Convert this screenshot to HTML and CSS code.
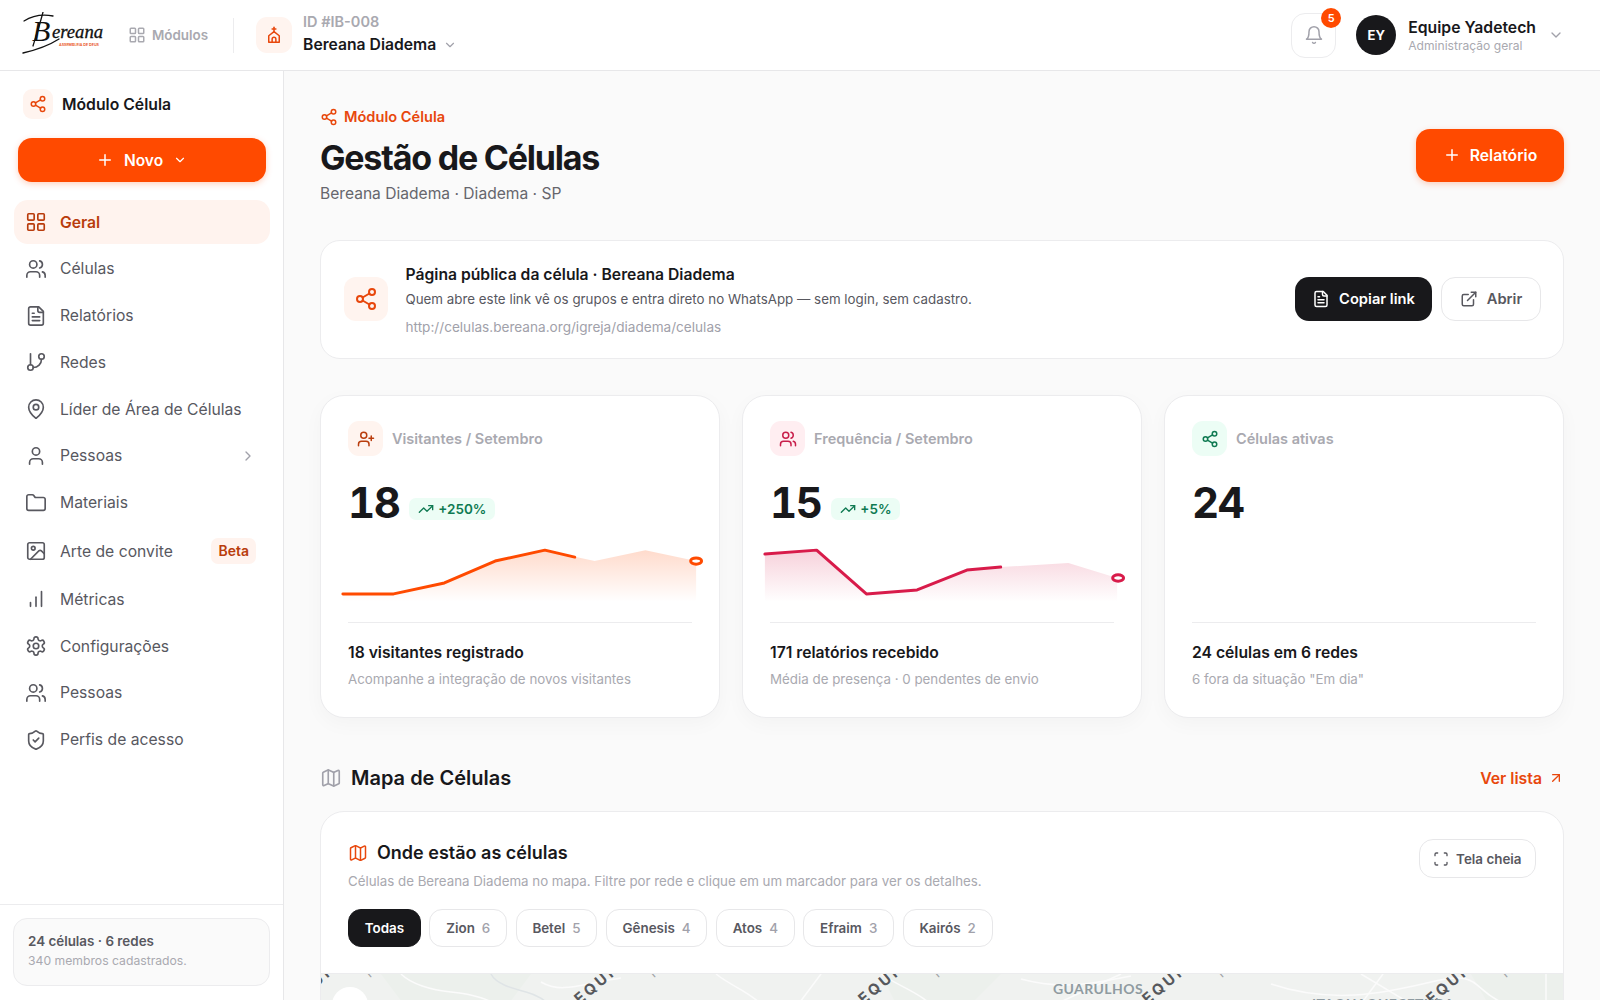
FILE: index.html
```html
<!DOCTYPE html>
<html lang="pt-BR">
<head>
    <meta charset="UTF-8">
    <title>Gestão de Células</title>
    <link rel="stylesheet" href="styles.css">
</head>
<body>

<!-- Icon sprite -->
<svg class="sprite" xmlns="http://www.w3.org/2000/svg">
    <symbol id="i-grid" viewBox="0 0 24 24"><rect x="3" y="3" width="7" height="7" rx="1"/><rect x="14" y="3" width="7" height="7" rx="1"/><rect x="14" y="14" width="7" height="7" rx="1"/><rect x="3" y="14" width="7" height="7" rx="1"/></symbol>
    <symbol id="i-share" viewBox="0 0 24 24"><circle cx="18" cy="5" r="3"/><circle cx="6" cy="12" r="3"/><circle cx="18" cy="19" r="3"/><path d="M8.59 13.51 15.42 17.49"/><path d="M15.41 6.51 8.59 10.49"/></symbol>
    <symbol id="i-users" viewBox="0 0 24 24"><path d="M16 21v-2a4 4 0 0 0-4-4H6a4 4 0 0 0-4 4v2"/><circle cx="9" cy="7" r="4"/><path d="M22 21v-2a4 4 0 0 0-3-3.87"/><path d="M16 3.13a4 4 0 0 1 0 7.75"/></symbol>
    <symbol id="i-file" viewBox="0 0 24 24"><path d="M15 2H6a2 2 0 0 0-2 2v16a2 2 0 0 0 2 2h12a2 2 0 0 0 2-2V7Z"/><path d="M14 2v4a2 2 0 0 0 2 2h4"/><path d="M10 9H8"/><path d="M16 13H8"/><path d="M16 17H8"/></symbol>
    <symbol id="i-branch" viewBox="0 0 24 24"><path d="M6 3v12"/><circle cx="18" cy="6" r="3"/><circle cx="6" cy="18" r="3"/><path d="M18 9a9 9 0 0 1-9 9"/></symbol>
    <symbol id="i-pin" viewBox="0 0 24 24"><path d="M20 10c0 4.993-5.539 10.193-7.399 11.799a1 1 0 0 1-1.202 0C9.539 20.193 4 14.993 4 10a8 8 0 0 1 16 0"/><circle cx="12" cy="10" r="3"/></symbol>
    <symbol id="i-user" viewBox="0 0 24 24"><path d="M19 21v-2a4 4 0 0 0-4-4H9a4 4 0 0 0-4 4v2"/><circle cx="12" cy="7" r="4"/></symbol>
    <symbol id="i-folder" viewBox="0 0 24 24"><path d="M20 20a2 2 0 0 0 2-2V8a2 2 0 0 0-2-2h-7.9a2 2 0 0 1-1.69-.9L9.6 3.9A2 2 0 0 0 7.93 3H4a2 2 0 0 0-2 2v13a2 2 0 0 0 2 2Z"/></symbol>
    <symbol id="i-image" viewBox="0 0 24 24"><rect x="3" y="3" width="18" height="18" rx="2"/><circle cx="9" cy="9" r="2"/><path d="m21 15-3.086-3.086a2 2 0 0 0-2.828 0L6 21"/></symbol>
    <symbol id="i-bars" viewBox="0 0 24 24"><path d="M12 20V10"/><path d="M18 20V4"/><path d="M6 20v-4"/></symbol>
    <symbol id="i-gear" viewBox="0 0 24 24"><path d="M12.22 2h-.44a2 2 0 0 0-2 2v.18a2 2 0 0 1-1 1.73l-.43.25a2 2 0 0 1-2 0l-.15-.08a2 2 0 0 0-2.73.73l-.22.38a2 2 0 0 0 .73 2.73l.15.1a2 2 0 0 1 1 1.72v.51a2 2 0 0 1-1 1.74l-.15.09a2 2 0 0 0-.73 2.73l.22.38a2 2 0 0 0 2.73.73l.15-.08a2 2 0 0 1 2 0l.43.25a2 2 0 0 1 1 1.73V20a2 2 0 0 0 2 2h.44a2 2 0 0 0 2-2v-.18a2 2 0 0 1 1-1.73l.43-.25a2 2 0 0 1 2 0l.15.08a2 2 0 0 0 2.73-.73l.22-.39a2 2 0 0 0-.73-2.73l-.15-.08a2 2 0 0 1-1-1.74v-.5a2 2 0 0 1 1-1.74l.15-.09a2 2 0 0 0 .73-2.73l-.22-.38a2 2 0 0 0-2.73-.73l-.15.08a2 2 0 0 1-2 0l-.43-.25a2 2 0 0 1-1-1.73V4a2 2 0 0 0-2-2z"/><circle cx="12" cy="12" r="3"/></symbol>
    <symbol id="i-shield" viewBox="0 0 24 24"><path d="M20 13c0 5-3.5 7.5-7.66 8.95a1 1 0 0 1-.67-.01C7.5 20.5 4 18 4 13V6a1 1 0 0 1 1-1c2 0 4.5-1.2 6.24-2.72a1.17 1.17 0 0 1 1.52 0C14.51 3.81 17 5 19 5a1 1 0 0 1 1 1z"/><path d="m9 12 2 2 4-4"/></symbol>
    <symbol id="i-bell" viewBox="0 0 24 24"><path d="M6 8a6 6 0 0 1 12 0c0 7 3 9 3 9H3s3-2 3-9"/><path d="M10.3 21a1.94 1.94 0 0 0 3.4 0"/></symbol>
    <symbol id="i-down" viewBox="0 0 24 24"><path d="m6 9 6 6 6-6"/></symbol>
    <symbol id="i-right" viewBox="0 0 24 24"><path d="m9 18 6-6-6-6"/></symbol>
    <symbol id="i-plus" viewBox="0 0 24 24"><path d="M5 12h14"/><path d="M12 5v14"/></symbol>
    <symbol id="i-userplus" viewBox="0 0 24 24"><path d="M16 21v-2a4 4 0 0 0-4-4H6a4 4 0 0 0-4 4v2"/><circle cx="9" cy="7" r="4"/><path d="M19 8v6"/><path d="M22 11h-6"/></symbol>
    <symbol id="i-trend" viewBox="0 0 24 24"><path d="M22 7 13.5 15.5 8.5 10.5 2 17"/><path d="M16 7h6v6"/></symbol>
    <symbol id="i-external" viewBox="0 0 24 24"><path d="M15 3h6v6"/><path d="M10 14 21 3"/><path d="M18 13v6a2 2 0 0 1-2 2H5a2 2 0 0 1-2-2V8a2 2 0 0 1 2-2h6"/></symbol>
    <symbol id="i-map" viewBox="0 0 24 24"><path d="M14.106 5.553a2 2 0 0 0 1.788 0l3.659-1.83A1 1 0 0 1 21 4.619v12.764a1 1 0 0 1-.553.894l-4.553 2.277a2 2 0 0 1-1.788 0l-4.212-2.106a2 2 0 0 0-1.788 0l-3.659 1.83A1 1 0 0 1 3 19.381V6.618a1 1 0 0 1 .553-.894l4.553-2.277a2 2 0 0 1 1.788 0z"/><path d="M15 5.764v15"/><path d="M9 3.236v15"/></symbol>
    <symbol id="i-arrow" viewBox="0 0 24 24"><path d="M7 7h10v10"/><path d="M7 17 17 7"/></symbol>
    <symbol id="i-scan" viewBox="0 0 24 24"><path d="M3 7V5a2 2 0 0 1 2-2h2"/><path d="M17 3h2a2 2 0 0 1 2 2v2"/><path d="M21 17v2a2 2 0 0 1-2 2h-2"/><path d="M7 21H5a2 2 0 0 1-2-2v-2"/></symbol>
    <symbol id="i-church" viewBox="0 0 24 24"><path d="M12 1.5v6"/><path d="M9.5 4h5"/><path d="M5 21.5v-8.5l7-5.5 7 5.5v8.500z"/><path d="M9.500 21.500v-4a2.500 2.500 0 0 1 5 0v4"/></symbol>
</svg>

<!-- Top bar -->
<header class="topbar">
    <svg class="logo" viewBox="0 0 82 44" role="img" aria-label="Bereana">
        <path class="logo-swoosh" d="M1 41C14 38 26 34 37 27"/>
        <path class="logo-swoosh" d="M2 9C10 4 20 2 31 4"/>
        <path class="logo-swoosh" d="M21 0C18 12 14 24 11 34"/>
        <text class="logo-b" x="10" y="29">B</text>
        <text class="logo-name" x="30" y="26" textLength="51" lengthAdjust="spacingAndGlyphs">ereana</text>
        <text class="logo-tag" x="37" y="34" textLength="40" lengthAdjust="spacingAndGlyphs">ASSEMBLEIA DE DEUS</text>
    </svg>
    <div class="modules"><svg class="icon icon-18"><use href="#i-grid"/></svg>Módulos</div>
    <div class="topbar-divider"></div>
    <div class="church-box"><svg class="icon icon-18"><use href="#i-church"/></svg></div>
    <div class="church-info">
        <div class="church-id">ID #IB-008</div>
        <div class="church-name">Bereana Diadema <svg class="icon icon-14"><use href="#i-down"/></svg></div>
    </div>
    <div class="topbar-right">
        <div class="bell">
            <svg class="icon icon-20"><use href="#i-bell"/></svg>
            <span class="bell-badge">5</span>
        </div>
        <div class="avatar">EY</div>
        <div class="user-info">
            <div class="user-name">Equipe Yadetech</div>
            <div class="user-role">Administração geral</div>
        </div>
        <svg class="icon icon-16 user-chevron"><use href="#i-down"/></svg>
    </div>
</header>

<div class="layout">

    <!-- Sidebar -->
    <aside class="sidebar">
        <div class="module-head">
            <div class="module-icon"><svg class="icon icon-18"><use href="#i-share"/></svg></div>
            Módulo Célula
        </div>
        <div class="new-button"><svg class="icon icon-18"><use href="#i-plus"/></svg>Novo<svg class="icon icon-14"><use href="#i-down"/></svg></div>
        <nav class="nav">
            <div class="nav-item active"><svg class="icon icon-20"><use href="#i-grid"/></svg>Geral</div>
            <div class="nav-item"><svg class="icon icon-20"><use href="#i-users"/></svg>Células</div>
            <div class="nav-item"><svg class="icon icon-20"><use href="#i-file"/></svg>Relatórios</div>
            <div class="nav-item"><svg class="icon icon-20"><use href="#i-branch"/></svg>Redes</div>
            <div class="nav-item"><svg class="icon icon-20"><use href="#i-pin"/></svg>Líder de Área de Células</div>
            <div class="nav-item"><svg class="icon icon-20"><use href="#i-user"/></svg>Pessoas<svg class="icon icon-16 nav-chevron"><use href="#i-right"/></svg></div>
            <div class="nav-item"><svg class="icon icon-20"><use href="#i-folder"/></svg>Materiais</div>
            <div class="nav-item nav-item-tall"><svg class="icon icon-20"><use href="#i-image"/></svg>Arte de convite<span class="beta">Beta</span></div>
            <div class="nav-item"><svg class="icon icon-20"><use href="#i-bars"/></svg>Métricas</div>
            <div class="nav-item"><svg class="icon icon-20"><use href="#i-gear"/></svg>Configurações</div>
            <div class="nav-item"><svg class="icon icon-20"><use href="#i-users"/></svg>Pessoas</div>
            <div class="nav-item"><svg class="icon icon-20"><use href="#i-shield"/></svg>Perfis de acesso</div>
        </nav>
        <div class="sidebar-foot">
            <div class="foot-card">
                <div class="foot-title">24 células · 6 redes</div>
                <div class="foot-sub">340 membros cadastrados.</div>
            </div>
        </div>
    </aside>

    <!-- Main content -->
    <main class="main">
        <div class="page-head">
            <div>
                <div class="eyebrow"><svg class="icon icon-18"><use href="#i-share"/></svg>Módulo Célula</div>
                <h1 class="page-title">Gestão de Células</h1>
                <div class="page-sub">Bereana Diadema · Diadema · SP</div>
            </div>
            <div class="report-button"><svg class="icon icon-18"><use href="#i-plus"/></svg>Relatório</div>
        </div>

        <section class="public-card">
            <div class="public-icon"><svg class="icon icon-24"><use href="#i-share"/></svg></div>
            <div class="public-text">
                <div class="public-title">Página pública da célula · Bereana Diadema</div>
                <div class="public-desc">Quem abre este link vê os grupos e entra direto no WhatsApp — sem login, sem cadastro.</div>
                <div class="public-url">http://celulas.bereana.org/igreja/diadema/celulas</div>
            </div>
            <div class="btn btn-dark"><svg class="icon icon-18"><use href="#i-file"/></svg>Copiar link</div>
            <div class="btn btn-light"><svg class="icon icon-18"><use href="#i-external"/></svg>Abrir</div>
        </section>

        <section class="stats">
            <div class="stat-card">
                <div class="stat-head">
                    <div class="stat-icon stat-icon-orange"><svg class="icon icon-18"><use href="#i-userplus"/></svg></div>
                    Visitantes / Setembro
                </div>
                <div class="stat-value"><span class="stat-number">18</span> <span class="trend"><svg class="icon icon-16"><use href="#i-trend"/></svg>+250%</span></div>
                <svg class="spark" viewBox="0 0 400 70">
                    <defs>
                        <linearGradient id="fillOrange" x1="0" y1="0" x2="0" y2="1"><stop offset="0" stop-color="#ff4a00" stop-opacity=".2"/><stop offset="1" stop-color="#ff4a00" stop-opacity="0"/></linearGradient>
                        <linearGradient id="fillRose" x1="0" y1="0" x2="0" y2="1"><stop offset="0" stop-color="#d81b4a" stop-opacity=".2"/><stop offset="1" stop-color="#d81b4a" stop-opacity="0"/></linearGradient>
                    </defs>
                    <path fill="url(#fillOrange)" d="M22 54 73 54 124 43 175 21 225 10 275 21 326 10 377 21V62H22Z"/>
                    <path class="spark-line spark-orange" d="M22 54 73 54 124 43 175 21 225 10 255 17"/>
                    <ellipse class="spark-dot spark-orange" cx="377" cy="21" rx="5.500" ry="3.200"/>
                </svg>
                <div class="stat-foot">
                    <div class="stat-strong">18 visitantes registrado</div>
                    <div class="stat-note">Acompanhe a integração de novos visitantes</div>
                </div>
            </div>
            <div class="stat-card">
                <div class="stat-head">
                    <div class="stat-icon stat-icon-rose"><svg class="icon icon-18"><use href="#i-users"/></svg></div>
                    Frequência / Setembro
                </div>
                <div class="stat-value"><span class="stat-number">15</span> <span class="trend"><svg class="icon icon-16"><use href="#i-trend"/></svg>+5%</span></div>
                <svg class="spark" viewBox="0 0 400 70">
                    <path fill="url(#fillRose)" d="M22 14 74 10 124 54 175 50 225 30 259 27 327 23 376 38V62H22Z"/>
                    <path class="spark-line spark-rose" d="M22 14 74 10 124 54 175 50 225 30 259 27"/>
                    <ellipse class="spark-dot spark-rose" cx="377" cy="38" rx="5.500" ry="3.200"/>
                </svg>
                <div class="stat-foot">
                    <div class="stat-strong">171 relatórios recebido</div>
                    <div class="stat-note">Média de presença · 0 pendentes de envio</div>
                </div>
            </div>
            <div class="stat-card">
                <div class="stat-head">
                    <div class="stat-icon stat-icon-green"><svg class="icon icon-18"><use href="#i-share"/></svg></div>
                    Células ativas
                </div>
                <div class="stat-value"><span class="stat-number">24</span></div>
                <div class="spark"></div>
                <div class="stat-foot">
                    <div class="stat-strong">24 células em 6 redes</div>
                    <div class="stat-note">6 fora da situação "Em dia"</div>
                </div>
            </div>
        </section>

        <div class="section-head">
            <svg class="icon icon-22"><use href="#i-map"/></svg>
            <h2 class="section-title">Mapa de Células</h2>
            <div class="section-link">Ver lista <svg class="icon icon-16"><use href="#i-arrow"/></svg></div>
        </div>

        <section class="map-card">
            <div class="map-top">
                <div>
                    <div class="map-title"><svg class="icon icon-20"><use href="#i-map"/></svg>Onde estão as células</div>
                    <div class="map-desc">Células de Bereana Diadema no mapa. Filtre por rede e clique em um marcador para ver os detalhes.</div>
                </div>
                <div class="fullscreen"><svg class="icon icon-16"><use href="#i-scan"/></svg>Tela cheia</div>
            </div>
            <div class="pills">
                <div class="pill pill-on">Todas</div>
                <div class="pill">Zion <span>6</span></div>
                <div class="pill">Betel <span>5</span></div>
                <div class="pill">Gênesis <span>4</span></div>
                <div class="pill">Atos <span>4</span></div>
                <div class="pill">Efraim <span>3</span></div>
                <div class="pill">Kairós <span>2</span></div>
            </div>
            <div class="map">
                <svg class="map-art" viewBox="0 0 1243 300" width="1243" height="300">
                    <path class="map-green" d="M1150 0h93v40h-70zM60 0h150l-30 40H90zM560 0h120l-40 40h-60z"/>
                    <path class="road" d="M80 0C90 10 110 16 130 18S170 24 190 40"/>
                    <path class="river" d="M170 0C175 10 190 14 205 18S225 28 240 40"/>
                    <path class="road" d="M220 8C240 20 260 10 300 4"/>
                    <path class="road" d="M395 0C410 12 425 16 440 30"/>
                    <path class="road" d="M500 0 470 40"/>
                    <path class="road" d="M560 0C580 14 600 18 620 40"/>
                    <path class="road" d="M700 5C740 16 770 10 810 2"/>
                    <path class="road" d="M735 30 800 0"/>
                    <path class="road" d="M950 10C1010 30 1060 20 1110 8S1150 14 1180 28"/>
                    <path class="road" d="M1040 0 1090 30"/>
                    <path class="road" d="M1062 0 1040 30"/>
                    <path class="road" d="M1225 0V40"/>
                    <g class="map-req">
                        <text transform="translate(-35 39) rotate(-40)">REQUIRED</text>
                        <text transform="translate(249 39) rotate(-40)">REQUIRED</text>
                        <text transform="translate(533 39) rotate(-40)">REQUIRED</text>
                        <text transform="translate(817 39) rotate(-40)">REQUIRED</text>
                        <text transform="translate(1101 39) rotate(-40)">REQUIRED</text>
                    </g>
                    <g class="map-key">
                        <text transform="translate(49 4) rotate(-40)">required/apikey</text>
                        <text transform="translate(333 4) rotate(-40)">required/apikey</text>
                        <text transform="translate(617 4) rotate(-40)">required/apikey</text>
                        <text transform="translate(901 4) rotate(-40)">required/apikey</text>
                        <text transform="translate(1185 4) rotate(-40)">required/apikey</text>
                    </g>
                    <text class="map-city" x="732" y="20">GUARULHOS</text>
                    <text class="map-city" x="991" y="35">ITAQUAQUECETUBA</text>
                </svg>
                <div class="map-zoom">+</div>
            </div>
        </section>
    </main>
</div>

</body>
</html>
```

FILE: styles.css
```css
* {
    box-sizing: border-box;
}

body, html {
    height: 100%;
    margin: 0;
    font-family: 'Inter', 'Liberation Sans', sans-serif;
    color: #18181b;
    background-color: #fafafa;
    overflow: hidden;
}

.sprite {
    display: none;
}

.icon {
    fill: none;
    stroke: currentColor;
    stroke-width: 2;
    stroke-linecap: round;
    stroke-linejoin: round;
    flex-shrink: 0;
}

.icon-14 { width: 14px; height: 14px; }
.icon-16 { width: 16px; height: 16px; }
.icon-18 { width: 18px; height: 18px; }
.icon-20 { width: 20px; height: 20px; stroke-width: 1.8; }
.icon-22 { width: 22px; height: 22px; }
.icon-24 { width: 24px; height: 24px; }

/* Top bar */
.topbar {
    display: flex;
    align-items: center;
    height: 71px;
    padding: 0 36px 0 22px;
    background: #fff;
    border-bottom: 1px solid #e7e7e9;
}

.logo {
    width: 82px;
    height: 44px;
    margin-bottom: 3px;
}

.logo-swoosh {
    fill: none;
    stroke: #111;
    stroke-width: 1.300;
    stroke-linecap: round;
}

.logo-b {
    font-family: 'Liberation Serif', serif;
    font-style: italic;
    font-size: 30px;
    fill: #111;
}

.logo-name {
    font-family: 'Liberation Serif', serif;
    font-style: italic;
    font-size: 18px;
    fill: #111;
    stroke: #111;
    stroke-width: 0.300;
}

.logo-tag {
    font-size: 3.500px;
    font-weight: 600;
    fill: #e8470c;
}

.modules {
    display: flex;
    align-items: center;
    gap: 6px;
    margin-left: 24px;
    font-size: 13.400px;
    font-weight: 600;
    color: #a9a9b0;
}

.topbar-divider {
    width: 1px;
    height: 35px;
    margin: 0 22px 0 25px;
    background: #ececee;
}

.church-box {
    display: flex;
    align-items: center;
    justify-content: center;
    width: 36px;
    height: 36px;
    border-radius: 11px;
    background: #fff4ef;
    color: #e8470c;
}

.church-info {
    margin: 0 0 3px 11px;
}

.church-id {
    font-size: 14.500px;
    line-height: 20px;
    font-weight: 600;
    color: #a9a9b0;
}

.church-name {
    display: flex;
    align-items: center;
    gap: 7px;
    margin-top: 2px;
    font-size: 15.700px;
    line-height: 22px;
    font-weight: 600;
}

.church-name .icon {
    color: #a1a1aa;
}

.topbar-right {
    display: flex;
    align-items: center;
    margin-left: auto;
}

.bell {
    position: relative;
    display: flex;
    align-items: center;
    justify-content: center;
    width: 45px;
    height: 45px;
    border: 1px solid #ececee;
    border-radius: 14px;
    color: #a1a1aa;
}

.bell-badge {
    position: absolute;
    top: -6px;
    right: -6px;
    width: 20px;
    height: 20px;
    border-radius: 50%;
    background: #ff4a00;
    color: #fff;
    font-size: 11px;
    font-weight: 600;
    line-height: 20px;
    text-align: center;
}

.avatar {
    display: flex;
    align-items: center;
    justify-content: center;
    width: 40px;
    height: 40px;
    margin-left: 20px;
    border-radius: 50%;
    background: #18181b;
    color: #fff;
    font-size: 13px;
    font-weight: 700;
}

.user-info {
    margin: 2px 0 0 12px;
}

.user-name {
    font-size: 15.750px;
    line-height: 20px;
    font-weight: 600;
}

.user-role {
    font-size: 12.100px;
    line-height: 16px;
    color: #a9a9b0;
}

.user-chevron {
    margin-left: 12px;
    color: #a1a1aa;
}

/* Layout */
.layout {
    display: flex;
    height: calc(100% - 71px);
}

/* Sidebar */
.sidebar {
    display: flex;
    flex-direction: column;
    flex-shrink: 0;
    width: 284px;
    background: #fff;
    border-right: 1px solid #e7e7e9;
}

.module-head {
    display: flex;
    align-items: center;
    gap: 9px;
    margin: 18px 0 0 23px;
    font-size: 15.750px;
    font-weight: 600;
}

.module-icon {
    display: flex;
    align-items: center;
    justify-content: center;
    width: 30px;
    height: 30px;
    border-radius: 9px;
    background: #fff4ef;
    color: #e8470c;
}

.new-button {
    display: flex;
    align-items: center;
    justify-content: center;
    gap: 10px;
    height: 44px;
    margin: 19px 17.500px 0;
    border-radius: 14px;
    background: #ff4a00;
    color: #fff;
    font-size: 15.500px;
    font-weight: 600;
    box-shadow: 0 2px 6px rgba(255, 74, 0, 0.25);
}

.nav {
    display: flex;
    flex-direction: column;
    gap: 2.800px;
    margin: 18px 13px 0 14px;
}

.nav-item {
    display: flex;
    align-items: center;
    gap: 13px;
    height: 44px;
    padding: 0 14px 0 11px;
    border-radius: 14px;
    font-size: 15.700px;
    color: #58585f;
}

.nav-item .icon-20 {
    width: 22px;
    height: 22px;
    color: #58585f;
}

.nav-item-tall {
    height: 47px;
}

.nav-item.active {
    background: #fff3ee;
    color: #b93c0c;
    font-weight: 600;
}

.nav-item.active .icon-20 {
    color: #b93c0c;
}

.nav-chevron {
    margin-left: auto;
    color: #a1a1aa;
}

.beta {
    margin-left: auto;
    padding: 5px 7px;
    border-radius: 7px;
    background: #fff3ee;
    color: #b93c0c;
    font-size: 14px;
    line-height: 16px;
    font-weight: 600;
}

.sidebar-foot {
    margin-top: auto;
    padding: 13px 13px 14px;
    border-top: 1px solid #ececee;
}

.foot-card {
    height: 68px;
    padding: 13px 14px;
    border: 1px solid #ececee;
    border-radius: 14px;
    background: #fafafa;
}

.foot-title {
    font-size: 13.400px;
    line-height: 18px;
    font-weight: 600;
    color: #58585f;
}

.foot-sub {
    margin-top: 3px;
    font-size: 12.200px;
    line-height: 16px;
    color: #a9a9b0;
}

/* Main */
.main {
    flex: 1;
    min-width: 0;
    padding: 36px 36px 0;
    overflow: hidden;
}

.page-head {
    display: flex;
    align-items: center;
    justify-content: space-between;
}

.eyebrow {
    display: flex;
    align-items: center;
    gap: 6px;
    font-size: 14.600px;
    line-height: 20px;
    font-weight: 600;
    color: #e8470c;
}

.page-title {
    margin: 10px 0 4px;
    font-size: 34px;
    line-height: 42px;
    font-weight: 700;
    letter-spacing: -1.200px;
}

.page-sub {
    font-size: 15.600px;
    line-height: 22px;
    color: #66666d;
}

.report-button {
    display: flex;
    align-items: center;
    justify-content: center;
    gap: 9px;
    width: 148px;
    height: 53px;
    margin-bottom: 2px;
    border-radius: 14px;
    background: #ff4a00;
    color: #fff;
    font-size: 15.700px;
    font-weight: 600;
    box-shadow: 0 2px 6px rgba(255, 74, 0, 0.25);
}

/* Public page card */
.public-card {
    display: flex;
    align-items: center;
    height: 119px;
    margin-top: 35px;
    padding: 0 22px 0 23px;
    background: #fff;
    border: 1px solid #ececee;
    border-radius: 20px;
}

.public-icon {
    display: flex;
    align-items: center;
    justify-content: center;
    width: 44px;
    height: 44px;
    margin-bottom: 2px;
    border-radius: 12px;
    background: #fff4ef;
    color: #e8470c;
}

.public-text {
    flex: 1;
    margin: 2px 0 0 17.500px;
}

.public-title {
    font-size: 15.700px;
    line-height: 22px;
    font-weight: 600;
}

.public-desc {
    margin-top: 3px;
    font-size: 13.350px;
    line-height: 20px;
    color: #58585f;
}

.public-url {
    margin-top: 8px;
    font-size: 13.600px;
    line-height: 20px;
    color: #a1a1aa;
}

.btn {
    display: flex;
    align-items: center;
    justify-content: center;
    gap: 9px;
    height: 44px;
    margin-bottom: 2px;
    border-radius: 14px;
    font-size: 14.700px;
    font-weight: 600;
}

.btn-dark {
    width: 137px;
    background: #18181b;
    color: #fff;
}

.btn-light {
    width: 100px;
    margin-left: 9px;
    background: #fff;
    border: 1px solid #e7e7e9;
    color: #58585f;
}

/* Stat cards */
.stats {
    display: grid;
    grid-template-columns: repeat(3, 1fr);
    gap: 22px;
    margin-top: 36px;
}

.stat-card {
    height: 323px;
    padding: 25px 27px 0;
    background: #fff;
    border: 1px solid #ececee;
    border-radius: 24px;
    box-shadow: 0 6px 20px rgba(0, 0, 0, 0.03);
}

.stat-head {
    display: flex;
    align-items: center;
    gap: 9px;
    font-size: 14.500px;
    font-weight: 600;
    color: #a9a9b0;
}

.stat-icon {
    display: flex;
    align-items: center;
    justify-content: center;
    width: 35px;
    height: 35px;
    border-radius: 11px;
}

.stat-icon-orange { background: #fff4ef; color: #b93c0c; }
.stat-icon-rose { background: #ffeef1; color: #c81e4a; }
.stat-icon-green { background: #ecfdf5; color: #0f7a52; }

.stat-value {
    display: flex;
    align-items: flex-end;
    gap: 10px;
    height: 50px;
    margin-top: 22px;
}

.stat-number {
    font-size: 42px;
    line-height: 50px;
    font-weight: 700;
    letter-spacing: -1.500px;
    font-variant-numeric: tabular-nums;
}

.trend {
    display: flex;
    align-items: center;
    gap: 4px;
    height: 22px;
    margin-bottom: 8px;
    padding: 0 9px;
    border-radius: 7px;
    background: #ecfdf5;
    color: #0f7a52;
    font-size: 13.500px;
    line-height: 22px;
    font-weight: 600;
}

.spark {
    display: block;
    width: 398px;
    height: 70px;
    margin: 12px -27px 0;
}

.spark-line {
    fill: none;
    stroke-width: 3;
    stroke-linecap: round;
    stroke-linejoin: round;
}

.spark-dot {
    fill: #fff;
    stroke-width: 3;
}

.spark-orange { stroke: #ff4a00; }
.spark-rose { stroke: #d81b4a; }

.stat-foot {
    margin-top: 12px;
    padding-top: 19px;
    border-top: 1px solid #ececee;
}

.stat-strong {
    font-size: 15.700px;
    line-height: 22px;
    font-weight: 600;
}

.stat-note {
    margin-top: 5px;
    font-size: 13.350px;
    line-height: 20px;
    color: #a9a9b0;
}

/* Map section */
.section-head {
    display: flex;
    align-items: center;
    gap: 9px;
    height: 28px;
    margin-top: 46px;
}

.section-head > .icon {
    color: #a1a1aa;
    stroke-width: 1.8;
}

.section-title {
    margin: 0;
    font-size: 20px;
    line-height: 28px;
    font-weight: 600;
}

.section-link {
    display: flex;
    align-items: center;
    gap: 6px;
    margin-left: auto;
    font-size: 15.800px;
    font-weight: 600;
    color: #e8470c;
}

.map-card {
    margin-top: 19px;
    padding-top: 27px;
    background: #fff;
    border: 1px solid #ececee;
    border-radius: 24px 24px 0 0;
    overflow: hidden;
}

.map-top {
    display: flex;
    align-items: flex-start;
    justify-content: space-between;
    padding: 0 27px;
}

.map-title {
    display: flex;
    align-items: center;
    gap: 9px;
    margin-top: 2px;
    font-size: 18px;
    line-height: 24px;
    font-weight: 600;
}

.map-title .icon {
    color: #e8470c;
}

.map-desc {
    margin-top: 6px;
    font-size: 13.300px;
    line-height: 20px;
    color: #a9a9b0;
}

.fullscreen {
    display: flex;
    align-items: center;
    gap: 7px;
    height: 39px;
    padding: 0 13.500px;
    border: 1px solid #e7e7e9;
    border-radius: 14px;
    font-size: 13.400px;
    font-weight: 600;
    color: #58585f;
}

.pills {
    display: flex;
    gap: 8.500px;
    margin-top: 18px;
    padding: 0 27px;
}

.pill {
    display: flex;
    align-items: center;
    gap: 7px;
    height: 38px;
    padding: 0 15.800px;
    border: 1px solid #e7e7e9;
    border-radius: 13px;
    font-size: 13.400px;
    font-weight: 600;
    color: #58585f;
}

.pill span {
    font-weight: 500;
    color: #a1a1aa;
}

.pill-on {
    border-color: #18181b;
    background: #18181b;
    color: #fff;
}

.map {
    position: relative;
    height: 300px;
    margin-top: 26px;
    background: #f0f2f0;
    border-top: 1px solid #ececee;
}

.map-art {
    display: block;
}

.map-green { fill: #ecf0ec; }
.road { fill: none; stroke: #fbfbfb; stroke-width: 1.500; }
.river { fill: none; stroke: #dfe4e6; stroke-width: 1.500; }

.map-req text {
    font-size: 15px;
    font-weight: 700;
    letter-spacing: 3px;
    fill: #56585c;
}

.map-key text {
    font-size: 12px;
    fill: #a0a3a6;
}

.map-city {
    font-family: 'Lato', sans-serif;
    font-size: 14px;
    font-weight: 700;
    letter-spacing: 0.4px;
    fill: #8f9ba1;
}

.map-zoom {
    position: absolute;
    top: 13px;
    left: 11px;
    width: 36px;
    height: 36px;
    border-radius: 50%;
    background: #fff;
    color: #18181b;
    font-size: 20px;
    line-height: 36px;
    text-align: center;
}
```
